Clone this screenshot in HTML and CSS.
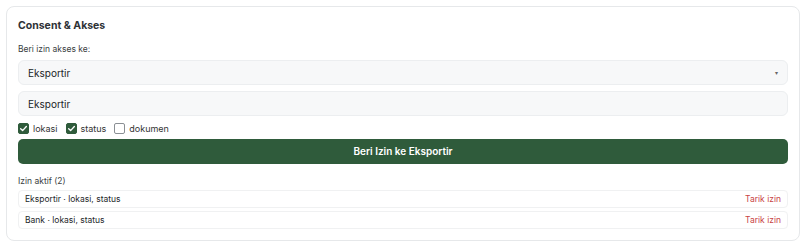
FILE: index.html
```html
<!DOCTYPE html>
<html lang="id">
<head>
<meta charset="utf-8">
<title>Consent & Akses</title>
<link rel="stylesheet" href="styles.css">
</head>
<body>
<section class="card">
  <h2 class="title">Consent &amp; Akses</h2>
  <label class="label">Beri izin akses ke:</label>
  <div class="select">
    <span>Eksportir</span>
    <span class="caret">▾</span>
  </div>
  <div class="input">Eksportir</div>
  <div class="checks">
    <label class="check"><span class="box on"><svg viewBox="0 0 12 12" width="9" height="9"><path d="M2.2 6.3 L4.8 8.8 L9.8 3.3" fill="none" stroke="#fff" stroke-width="1.8" stroke-linecap="round" stroke-linejoin="round"/></svg></span>lokasi</label>
    <label class="check"><span class="box on"><svg viewBox="0 0 12 12" width="9" height="9"><path d="M2.2 6.3 L4.8 8.8 L9.8 3.3" fill="none" stroke="#fff" stroke-width="1.8" stroke-linecap="round" stroke-linejoin="round"/></svg></span>status</label>
    <label class="check"><span class="box"></span>dokumen</label>
  </div>
  <button class="btn">Beri Izin ke Eksportir</button>
  <div class="sub">Izin aktif (2)</div>
  <ul class="list">
    <li class="row"><span>Eksportir · lokasi, status</span><a class="revoke">Tarik izin</a></li>
    <li class="row"><span>Bank · lokasi, status</span><a class="revoke">Tarik izin</a></li>
  </ul>
</section>
</body>
</html>
```
FILE: styles.css
```css
* { box-sizing: border-box; }
body {
  margin: 0;
  padding: 6px;
  font-family: "Inter", "Noto Sans", sans-serif;
  color: #2b2f33;
  background: #fff;
}
.card {
  width: 794px;
  height: 235px;
  border: 1px solid #e6e8ea;
  border-radius: 8px;
  padding: 11px 11px;
  display: flex;
  flex-direction: column;
}
.title {
  margin: 0;
  font-size: 10.5px;
  font-weight: 700;
  line-height: 14px;
  margin-top: 1px;
  color: #2e3236;
}
.label {
  margin-top: 10px;
  font-size: 8.5px;
  line-height: 12px;
  color: #3a3e42;
}
.select, .input {
  height: 26px;
  border: 1px solid #eceef0;
  background: #f7f8f9;
  border-radius: 6px;
  padding: 0 9px;
  display: flex;
  align-items: center;
  font-size: 10px;
  color: #202326;
}
.select { margin-top: 5px; justify-content: space-between; }
.caret { font-size: 6px; color: #666; }
.input { margin-top: 6px; }
.checks {
  margin-top: 6px;
  display: flex;
  align-items: center;
  gap: 8px;
  height: 12px;
}
.check {
  display: flex;
  align-items: center;
  gap: 4px;
  font-size: 9px;
  color: #333;
}
.box {
  width: 11px;
  height: 11px;
  border: 1px solid #8a8f94;
  border-radius: 2px;
  display: flex;
  align-items: center;
  justify-content: center;
  background: #fff;
}
.box.on { background: #2f5b3b; border-color: #2f5b3b; }
.btn {
  margin-top: 5px;
  height: 26px;
  border: none;
  border-radius: 5px;
  background: #2f5b3b;
  color: #fff;
  font-family: inherit;
  font-size: 10px;
  font-weight: 600;
}
.sub {
  margin-top: 11px;
  font-size: 8.5px;
  line-height: 12px;
  color: #3a3e42;
}
.list {
  list-style: none;
  margin: 3px 0 0;
  padding: 0;
  display: flex;
  flex-direction: column;
  gap: 3px;
}
.row {
  height: 18px;
  border: 1px solid #f0f1f2;
  border-radius: 4px;
  padding: 0 6px;
  display: flex;
  align-items: center;
  justify-content: space-between;
  font-size: 8.5px;
  color: #25282b;
}
.revoke { color: #c84444; font-size: 8.5px; }
```
